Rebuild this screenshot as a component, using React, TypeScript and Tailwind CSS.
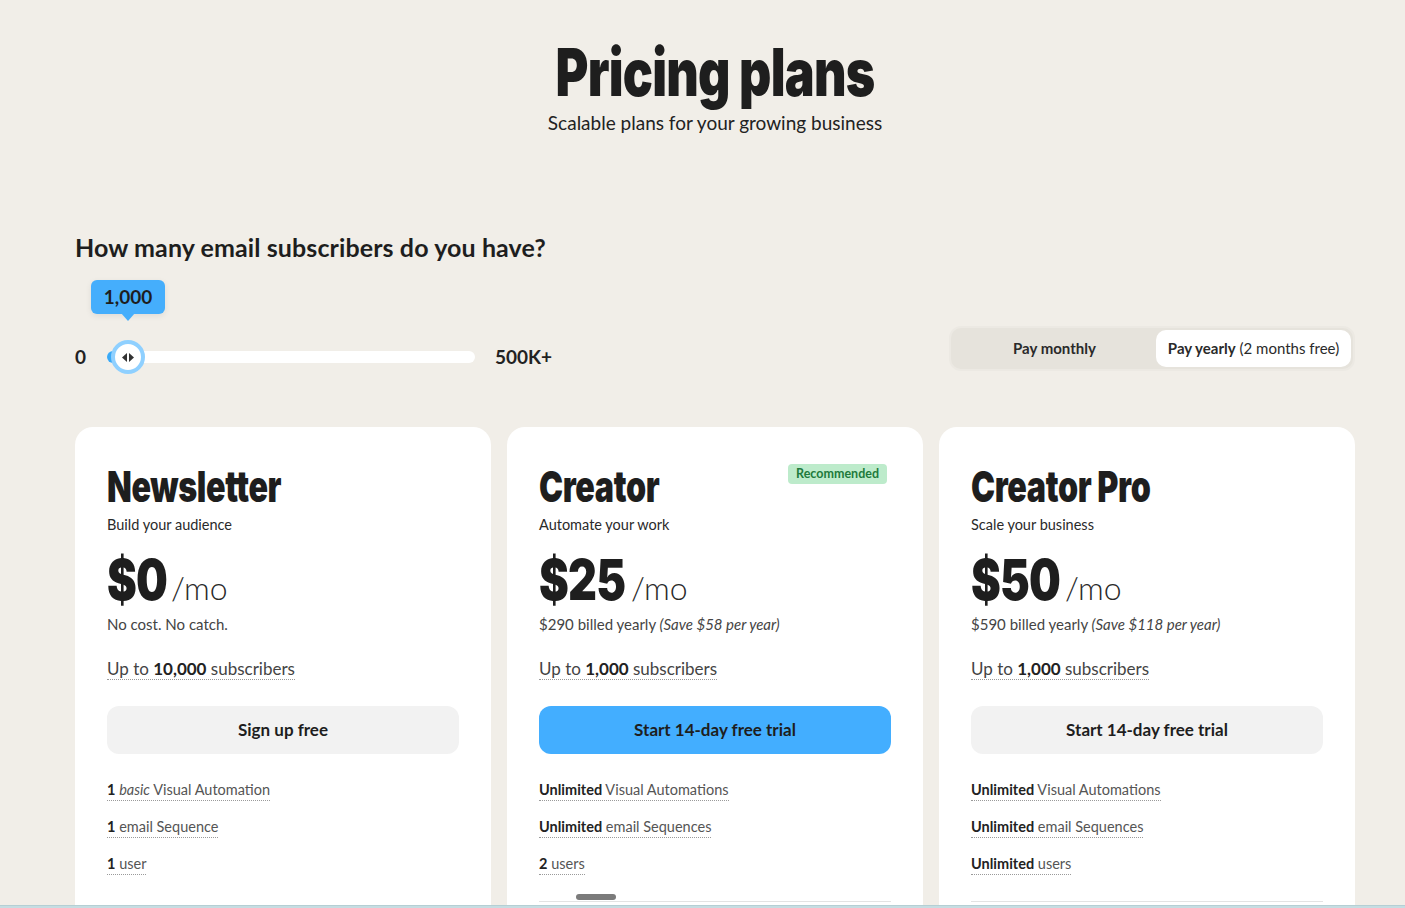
import React from "react";

const HEAD = { fontFamily: 'Inter, "Liberation Sans", sans-serif' };
const BODY = { fontFamily: 'Lato, "Liberation Sans", sans-serif' };

function Feat({ children }: { children: React.ReactNode }) {
  return (
    <div className="h-[24px] leading-[24px]">
      <span className="inline-block border-b border-dotted border-[#9a9a9a] leading-[20px] text-[14.5px] text-[#555]">
        {children}
      </span>
    </div>
  );
}

type Plan = {
  name: string;
  sub: string;
  price: string;
  priceW: string;
  note: React.ReactNode;
  subs: string;
  cta: string;
  primary?: boolean;
  badge?: boolean;
  feats: React.ReactNode[];
  line?: boolean;
  pill?: boolean;
};

function Card({ p }: { p: Plan }) {
  return (
    <div className="relative w-[416px] bg-white rounded-[18px] px-[32px] pt-[35px] pb-[40px]">
      <div className="flex justify-between items-start">
        <h2
          style={HEAD}
          className="origin-left scale-x-[0.75] whitespace-nowrap text-[43px] leading-[48px] font-black tracking-[-0.5px] text-[#1e1e1e]"
        >
          {p.name}
        </h2>
        {p.badge && (
          <span className="mt-[2px] mr-[4px] rounded-[4px] bg-[#bdebcb] px-[8px] h-[20px] leading-[20px] text-[12.5px] font-bold text-[#217a3c]">
            Recommended
          </span>
        )}
      </div>
      <div className="mt-[3px] text-[14.5px] leading-[24px] text-[#2a2a2a]">{p.sub}</div>
      <div className="mt-[15px] flex items-baseline">
        <span className={"inline-block " + p.priceW}>
          <span
            style={HEAD}
            className="inline-block origin-left scale-x-[0.8] whitespace-nowrap text-[56px] leading-[56px] font-black tracking-[-1px] text-[#1e1e1e]"
          >
            {p.price}
          </span>
        </span>
        <span className="ml-[6px] text-[32px] leading-[32px] font-light text-[#2a2a2a]">/mo</span>
      </div>
      <div className="mt-[4px] text-[15px] leading-[24px] text-[#444]">{p.note}</div>
      <div className="mt-[21px] h-[24px] leading-[24px]">
        <span className="inline-block border-b border-dotted border-[#9a9a9a] leading-[21px] text-[17px] text-[#444]">
          Up to <b className="font-bold text-[#222]">{p.subs}</b> subscribers
        </span>
      </div>
      <button
        className={
          "mt-[25px] w-full h-[48px] rounded-[12px] text-[17px] font-bold text-[#1e1e1e] " +
          (p.primary ? "bg-[#43aeff]" : "bg-[#f2f2f2]")
        }
      >
        {p.cta}
      </button>
      <div className="mt-[23px] flex flex-col gap-[13px]">
        {p.feats.map((f, i) => (
          <Feat key={i}>{f}</Feat>
        ))}
      </div>
      {p.line && <div className="mt-[26px] h-px bg-[#e3e3e3]" />}
      {p.pill && <div className="absolute left-[69px] top-[467px] w-[40px] h-[6px] rounded-full bg-[#7b7b7b]" />}
    </div>
  );
}

export default function App() {
  const plans: Plan[] = [
    {
      name: "Newsletter",
      sub: "Build your audience",
      price: "$0",
      priceW: "w-[58px]",
      note: "No cost. No catch.",
      subs: "10,000",
      cta: "Sign up free",
      feats: [
        <>
          <b className="font-bold text-[#222]">1</b> <i>basic</i> Visual Automation
        </>,
        <>
          <b className="font-bold text-[#222]">1</b> email Sequence
        </>,
        <>
          <b className="font-bold text-[#222]">1</b> user
        </>,
      ],
    },
    {
      name: "Creator",
      sub: "Automate your work",
      price: "$25",
      priceW: "w-[86px]",
      note: (
        <>
          $290 billed yearly <i>(Save $58 per year)</i>
        </>
      ),
      subs: "1,000",
      cta: "Start 14-day free trial",
      primary: true,
      badge: true,
      line: true,
      pill: true,
      feats: [
        <>
          <b className="font-bold text-[#222]">Unlimited</b> Visual Automations
        </>,
        <>
          <b className="font-bold text-[#222]">Unlimited</b> email Sequences
        </>,
        <>
          <b className="font-bold text-[#222]">2</b> users
        </>,
      ],
    },
    {
      name: "Creator Pro",
      sub: "Scale your business",
      price: "$50",
      priceW: "w-[88px]",
      note: (
        <>
          $590 billed yearly <i>(Save $118 per year)</i>
        </>
      ),
      subs: "1,000",
      cta: "Start 14-day free trial",
      line: true,
      feats: [
        <>
          <b className="font-bold text-[#222]">Unlimited</b> Visual Automations
        </>,
        <>
          <b className="font-bold text-[#222]">Unlimited</b> email Sequences
        </>,
        <>
          <b className="font-bold text-[#222]">Unlimited</b> users
        </>,
      ],
    },
  ];

  return (
    <div style={BODY} className="relative h-[908px] w-full overflow-hidden bg-[#f1eee8] text-[#1e1e1e]">
      <div className="ml-[75px] w-[1280px]">
        <div className="flex flex-col items-center pt-[36px]">
          <h1
            style={HEAD}
            className="w-full text-center scale-x-[0.76] whitespace-nowrap text-[66px] leading-[72px] font-black tracking-[-1px] text-[#1e1e1e]"
          >
            Pricing plans
          </h1>
          <p className="mt-[1px] text-[19px] leading-[28px] text-[#222]">Scalable plans for your growing business</p>
        </div>

        <div className="mt-[94px] flex items-end justify-between">
          <div className="flex flex-col">
            <h3 className="text-[25px] leading-[32px] font-bold tracking-[0.1px] text-[#1e1e1e]">
              How many email subscribers do you have?
            </h3>
            <div className="relative ml-[16px] mt-[17px] w-[74px] h-[34px] rounded-[6px] bg-[#45aefc] shadow-[0_2px_6px_rgba(0,0,0,0.08)] flex items-center justify-center text-[19px] font-bold text-[#1e1e1e]">
              1,000
              <div className="absolute left-[30px] top-[33px] w-0 h-0 border-l-[7px] border-r-[7px] border-t-[8px] border-l-transparent border-r-transparent border-t-[#45aefc]" />
            </div>
            <div className="mt-[26px] flex items-center h-[34px]">
              <span className="w-[12px] text-[19px] font-bold text-[#222]">0</span>
              <div className="relative ml-[20px] w-[368px] h-[12px] rounded-full bg-white">
                <div className="absolute left-0 top-0 h-[12px] w-[24px] rounded-full bg-[#3aa9f6]" />
                <div className="absolute left-[4px] top-[-11px] w-[34px] h-[34px] rounded-full bg-white border-[4px] border-[#8fd0ff] flex items-center justify-center">
                  <svg width="12" height="9" viewBox="0 0 12 9">
                    <polygon points="0,4.5 5,0 5,9" fill="#333" />
                    <polygon points="7,0 12,4.5 7,9" fill="#333" />
                  </svg>
                </div>
              </div>
              <span className="ml-[20px] text-[19px] font-bold text-[#222]">500K+</span>
            </div>
          </div>
          <div className="mb-[3px] flex w-[406px] h-[45px] items-center rounded-[12px] bg-[#e6e3dc] border-2 border-[#ece9e3] p-[2px]">
            <div className="flex-1 h-full flex items-center justify-center text-[15px] font-bold text-[#2a2a2a]">
              Pay monthly
            </div>
            <div className="w-[195px] h-full rounded-[10px] bg-white flex items-center justify-center text-[15px] text-[#2a2a2a]">
              <b className="font-bold">Pay yearly</b>&nbsp;(2 months free)
            </div>
          </div>
        </div>

        <div className="mt-[53px] flex gap-[16px]">
          {plans.map((p) => (
            <Card key={p.name} p={p} />
          ))}
        </div>
      </div>

      <div className="absolute bottom-0 left-0 right-0 h-[3px] bg-[#c6dde2] border-t border-[#b5cfd4]" />
    </div>
  );
}
